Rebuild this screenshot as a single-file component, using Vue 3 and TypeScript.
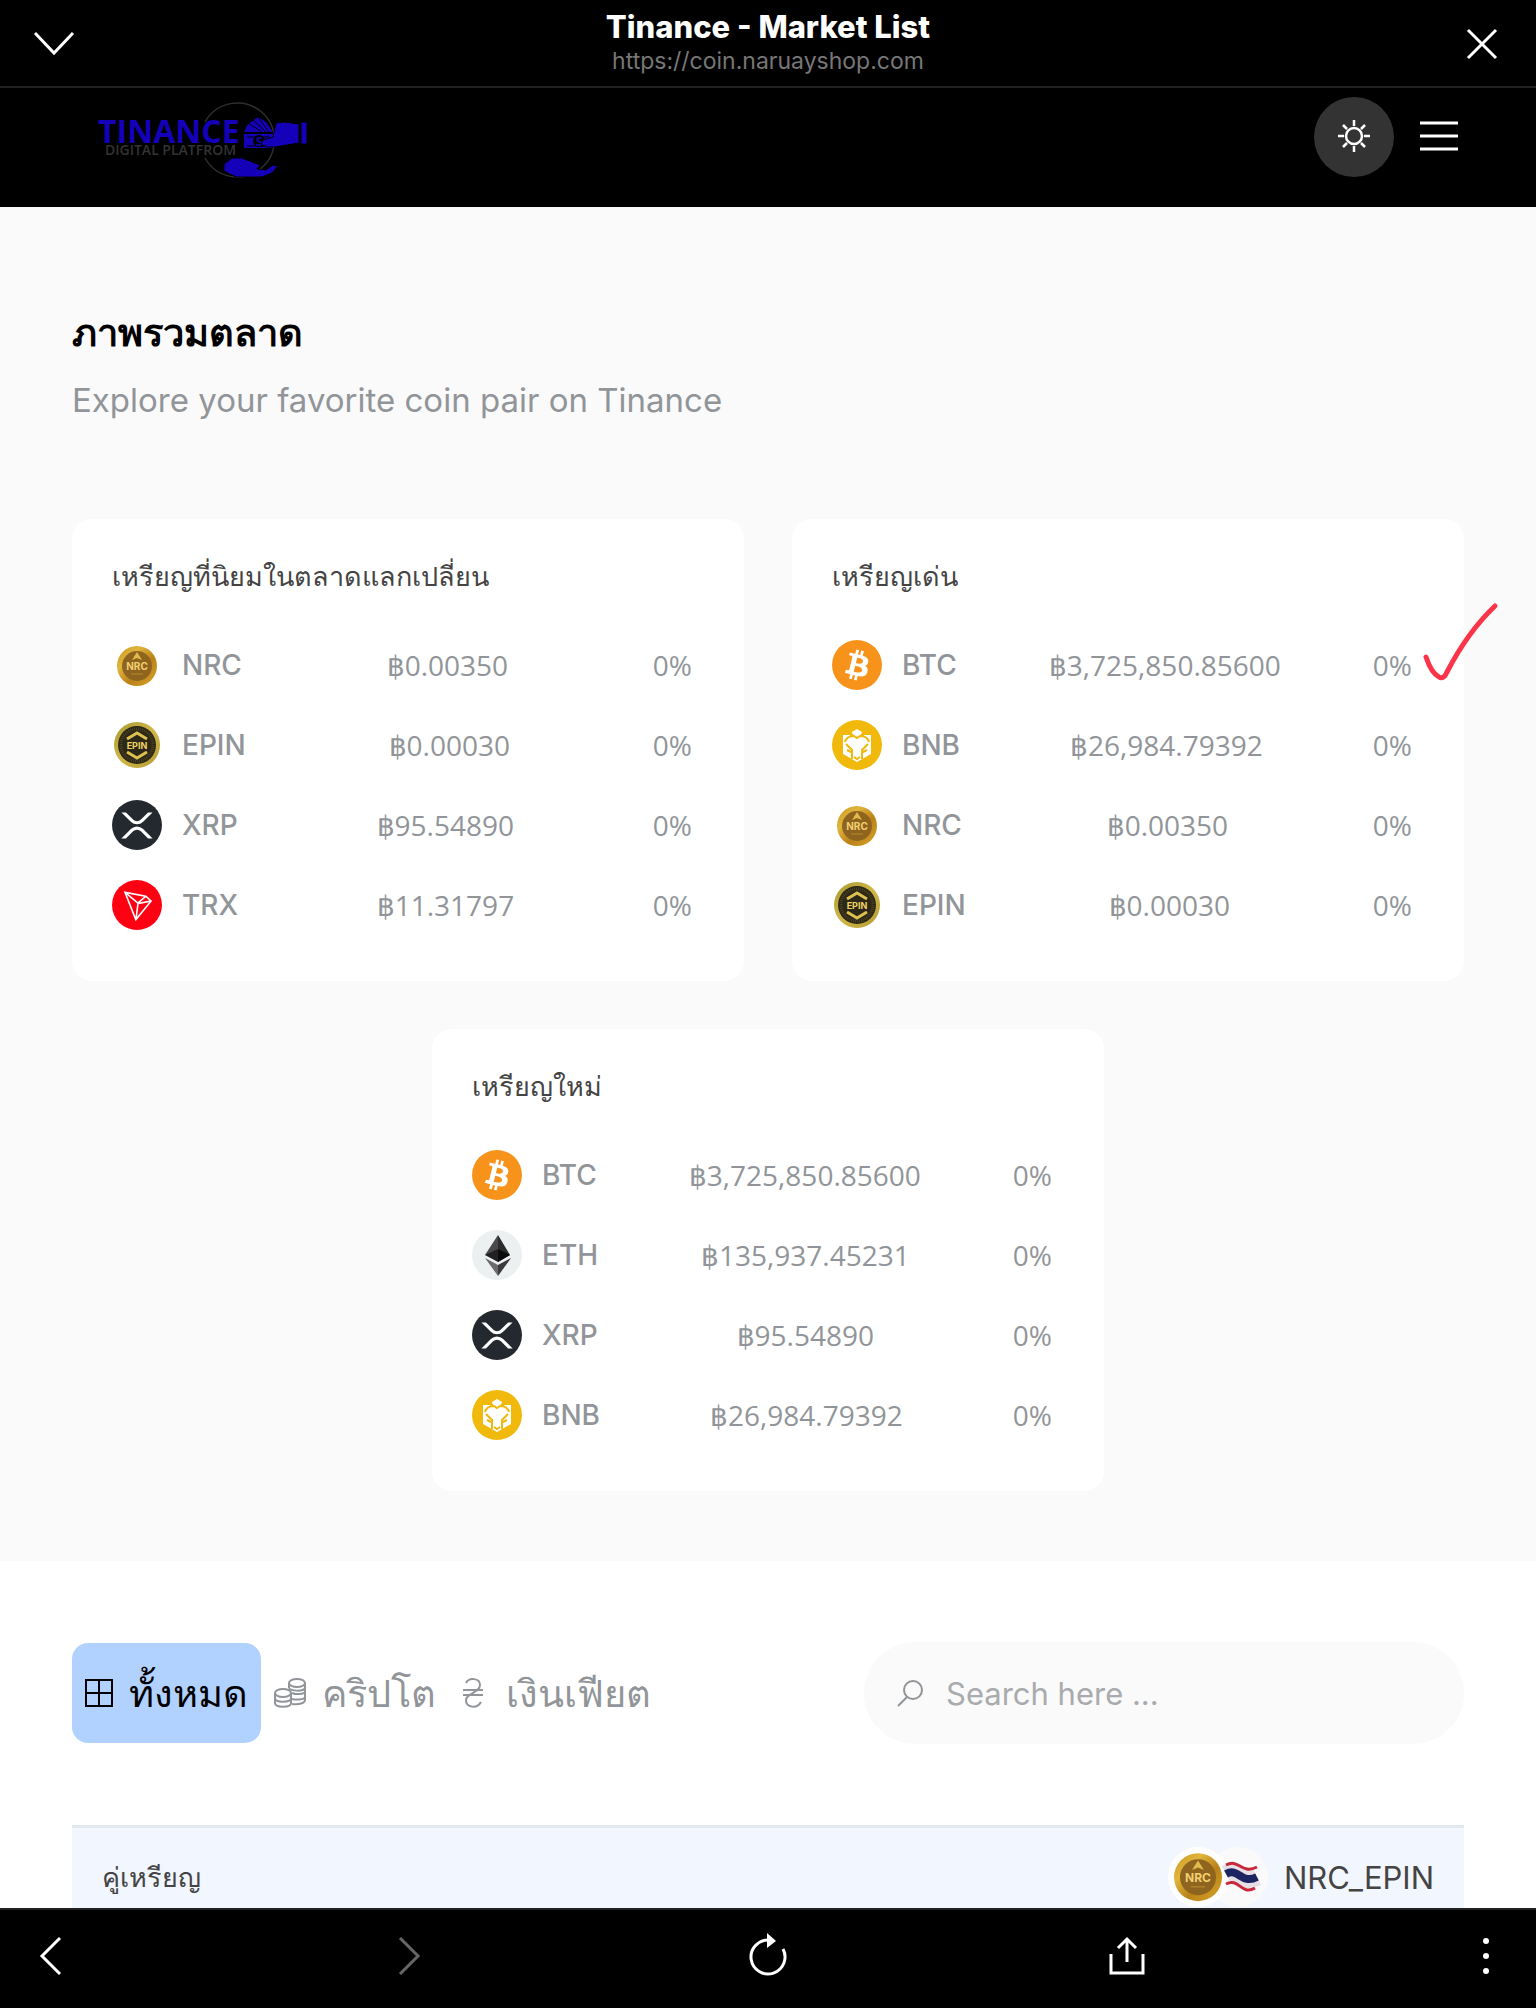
<script setup lang="ts">
interface CoinRow {
  symbol: string
  price: string
  change: string
}

interface CoinCard {
  title: string
  marked: boolean
  coins: CoinRow[]
}

const prices: Record<string, string> = {
  NRC: '฿0.00350',
  EPIN: '฿0.00030',
  XRP: '฿95.54890',
  TRX: '฿11.31797',
  BTC: '฿3,725,850.85600',
  BNB: '฿26,984.79392',
  ETH: '฿135,937.45231',
}

const rows = (...symbols: string[]): CoinRow[] =>
  symbols.map((symbol) => ({ symbol, price: prices[symbol], change: '0%' }))

const cards: CoinCard[] = [
  { title: 'เหรียญที่นิยมในตลาดแลกเปลี่ยน', marked: false, coins: rows('NRC', 'EPIN', 'XRP', 'TRX') },
  { title: 'เหรียญเด่น', marked: true, coins: rows('BTC', 'BNB', 'NRC', 'EPIN') },
  { title: 'เหรียญใหม่', marked: false, coins: rows('BTC', 'ETH', 'XRP', 'BNB') },
]
</script>

<template>
  <div class="shell">
    <svg class="sprite" width="0" height="0" aria-hidden="true">
      <defs>
        <linearGradient id="gold" x1="0" y1="0" x2="1" y2="1">
          <stop offset="0" stop-color="#c8961e" />
          <stop offset="0.3" stop-color="#e0b53c" />
          <stop offset="0.6" stop-color="#b98218" />
          <stop offset="1" stop-color="#d9a62c" />
        </linearGradient>
        <linearGradient id="brass" x1="0" y1="0" x2="1" y2="1">
          <stop offset="0" stop-color="#a89a2e" />
          <stop offset="0.5" stop-color="#d0b848" />
          <stop offset="1" stop-color="#b39a30" />
        </linearGradient>
      </defs>
      <symbol id="coin-NRC" viewBox="0 0 50 50">
        <circle cx="25" cy="26" r="20" fill="url(#gold)" />
        <circle cx="25" cy="26" r="15" fill="#8f641f" />
        <path d="M25 12l5 8-5-2-5 2z" fill="#e3bb4c" />
        <text x="25" y="30" class="coin-text" font-size="10" fill="#f0d070">NRC</text>
        <path d="M19 34h12" stroke="#b58a30" stroke-width="1" />
      </symbol>
      <symbol id="coin-EPIN" viewBox="0 0 50 50">
        <circle cx="25" cy="25" r="23" fill="url(#brass)" />
        <circle cx="25" cy="25" r="19" fill="#2c2716" />
        <circle cx="25" cy="25" r="16" fill="none" stroke="#4b4224" stroke-width="3" stroke-dasharray="1 1" />
        <path d="M15 19l10-6 10 6M15 32l10 6 10-6" fill="none" stroke="#dcc050" stroke-width="3" />
        <text x="25" y="29" class="coin-text" font-size="9" fill="#ecd464">EPIN</text>
      </symbol>
      <symbol id="coin-XRP" viewBox="0 0 32 32">
        <circle cx="16" cy="16" r="16" fill="#23292f" />
        <path d="M23.07 8h2.89l-6.015 5.957a5.621 5.621 0 01-7.89 0L6.035 8H8.93l4.57 4.523a3.556 3.556 0 004.996 0L23.07 8zM8.895 24.563H6l6.055-5.993a5.621 5.621 0 017.89 0L26 24.562h-2.895L18.5 20a3.556 3.556 0 00-4.996 0l-4.61 4.563z" fill="#fff" />
      </symbol>
      <symbol id="coin-TRX" viewBox="0 0 32 32">
        <circle cx="16" cy="16" r="16" fill="#ff0013" />
        <path d="M21.932 9.913L7.5 7.257l7.595 19.112 10.583-12.894-3.746-3.562zm-.232 1.17l2.208 2.099-6.038 1.093 3.83-3.192zm-5.142 2.973l-6.364-5.278 10.402 1.914-4.038 3.364zm-.453.934l-1.038 8.58L9.472 9.487l6.633 5.502zm.96.455l6.687-1.21-7.67 9.343.983-8.133z" fill="#fff" />
      </symbol>
      <symbol id="coin-BTC" viewBox="0 0 32 32">
        <circle cx="16" cy="16" r="16" fill="#f7931a" />
        <path d="M23.189 14.02c.314-2.096-1.283-3.223-3.465-3.975l.708-2.84-1.728-.43-.69 2.765c-.454-.114-.92-.22-1.385-.326l.695-2.783L15.596 6l-.708 2.839c-.376-.086-.746-.17-1.104-.26l.002-.009-2.384-.595-.46 1.846s1.283.294 1.256.312c.7.175.826.638.805 1.006l-.806 3.235c.048.012.11.03.18.057l-.183-.045-1.13 4.532c-.086.212-.303.531-.793.41.018.025-1.256-.313-1.256-.313l-.858 1.978 2.25.561c.418.105.828.215 1.231.318l-.715 2.872 1.727.43.708-2.84c.472.127.93.245 1.378.357l-.706 2.828 1.728.43.715-2.866c2.948.558 5.164.333 6.097-2.333.752-2.146-.037-3.385-1.588-4.192 1.13-.26 1.98-1.003 2.207-2.538zm-3.95 5.538c-.533 2.147-4.148.986-5.32.695l.95-3.805c1.172.293 4.929.872 4.37 3.11zm.535-5.569c-.487 1.953-3.495.96-4.47.717l.86-3.45c.975.243 4.118.696 3.61 2.733z" fill="#fff" />
      </symbol>
      <symbol id="coin-BNB" viewBox="0 0 50 50">
        <circle cx="25" cy="25" r="25" fill="#f0b90b" />
        <path d="M25 9l5 3v3h9v19l-14 8-14-8V15h9v-3z" fill="#fff" />
        <path d="M13 22c1-4 5-6 9-6l3 2 3-2c4 0 8 2 9 6M18 16l3-2M32 16l-3-2M14 24l6 6v9M36 24l-6 6v9M15 30l4 2M35 30l-4 2M22 37l3 2 3-2" fill="none" stroke="#f0b90b" stroke-width="2" />
      </symbol>
      <symbol id="coin-ETH" viewBox="0 0 50 50">
        <circle cx="25" cy="25" r="25" fill="#ecf0f1" />
        <path d="M26 5v21l-13-1z" fill="#4a4a4a" />
        <path d="M26 5l12 20-12 7z" fill="#2b2b2b" />
        <path d="M26 19v13l-13-7z" fill="#222" />
        <path d="M26 19l12 6-12 7z" fill="#0c0c0c" />
        <path d="M13 28l13 7v11z" fill="#6b6b6b" />
        <path d="M39 28l-13 7v11z" fill="#3a3a3a" />
      </symbol>
    </svg>

    <header class="browser-bar">
      <button class="bar-button" type="button" aria-label="Minimize">
        <svg width="40" height="40" viewBox="0 0 40 40" fill="none" stroke="#fff" stroke-width="3"><path d="M1 10l19 20L39 10" /></svg>
      </button>
      <div class="page-id">
        <div class="page-title">Tinance - Market List</div>
        <div class="page-url">https://coin.naruayshop.com</div>
      </div>
      <button class="bar-button" type="button" aria-label="Close">
        <svg width="40" height="40" viewBox="0 0 40 40" fill="none" stroke="#fff" stroke-width="3"><path d="M6 7l28 28M34 7L6 35" /></svg>
      </button>
    </header>

    <div class="viewport">
      <nav class="site-nav">
        <a class="logo" href="#" aria-label="Tinance Digital Platfrom">
          <svg width="216" height="80" viewBox="0 0 216 80">
            <path d="M107 25a37 37 0 1 1 0 36" fill="none" stroke="#2f2f2a" stroke-width="1.5" />
            <text x="0" y="46" class="logo-name">TINANCE</text>
            <text x="7" y="58" class="logo-sub">DIGITAL PLATFROM</text>
            <g fill="#1400b8">
              <path d="M146 35l4-8 10-7 8 5 7 10z" />
              <path d="M146 37h29v14h-29z" />
            </g>
            <path d="M150 26l14 9M154 22l14 13M160 20l11 15M149 40h22M149 49h24" stroke="#000" stroke-width="1" />
            <circle cx="161" cy="44" r="6" fill="#000" />
            <text x="158" y="49" class="logo-dollar">S</text>
            <g fill="#1400b8" stroke="#000" stroke-width="1">
              <path d="M178 26l8-1 15 2v19l-12 2-12 2h-8l-6-3 2-4 10-3zM203 25h6v22h-6z" />
              <path d="M126 67l8-6h10l10 4 8 3-3 4 9 1 7-5 5 1-6 7-10 4h-26l-12-6z" />
            </g>
          </svg>
        </a>
        <div class="nav-actions">
          <button class="theme-toggle" type="button" aria-label="Theme">
            <svg width="36" height="36" viewBox="0 0 36 36" fill="none" stroke="#fff" stroke-width="2.500">
              <circle cx="18" cy="17" r="8" />
              <path d="M18 1v6M18 27v6M2 17h6M28 17h6M7 6l4 4M25 24l4 4M29 6l-4 4M11 24l-4 4" />
            </svg>
          </button>
          <button class="menu-button" type="button" aria-label="Menu">
            <svg width="38" height="32" viewBox="0 0 38 32" stroke="#fff" stroke-width="3"><path d="M0 2h38M0 15h38M0 28h38" /></svg>
          </button>
        </div>
      </nav>

      <section class="overview">
        <h1>ภาพรวมตลาด</h1>
        <p class="lead">Explore your favorite coin pair on Tinance</p>
        <div class="cards">
          <article v-for="card in cards" :key="card.title" class="card">
            <h2>{{ card.title }}</h2>
            <ul>
              <li v-for="coin in card.coins" :key="coin.symbol">
                <span class="coin">
                  <svg width="50" height="50" aria-hidden="true"><use :href="'#coin-' + coin.symbol" /></svg>
                  <span class="symbol">{{ coin.symbol }}</span>
                </span>
                <span class="figure">{{ coin.price }}</span>
                <span class="figure">{{ coin.change }}</span>
              </li>
            </ul>
            <svg v-if="card.marked" class="mark" width="84" height="88" viewBox="0 0 84 88" fill="none" stroke="#fb3449" stroke-width="5" stroke-linecap="round" stroke-linejoin="round" aria-hidden="true">
              <path d="M6 58c3 9 7 17 13 20 3 2 6 0 8-5C41 46 55 26 75 7" />
            </svg>
          </article>
        </div>
      </section>

      <section class="market">
        <div class="filters">
          <div class="tabs">
            <button class="tab active" type="button">
              <svg width="28" height="28" viewBox="0 0 28 28" fill="none" stroke="currentColor" stroke-width="2"><path d="M1 1h26v26H1zM14 1v26M1 14h26" /></svg>
              <span>ทั้งหมด</span>
            </button>
            <button class="tab" type="button">
              <svg width="32" height="32" viewBox="0 0 32 32" fill="none" stroke="currentColor" stroke-width="2">
                <ellipse cx="23" cy="6" rx="8" ry="4" />
                <path d="M15 6v5M31 6v17c0 3-6 5-13 4M15 11c2 3 14 4 16 0M18 16c4 2 12 1 13-1M18 22c4 1 12 1 13-2" />
                <ellipse cx="9" cy="16" rx="8" ry="4" />
                <path d="M1 16v10c0 5 16 5 16 0V16M1 21c0 5 16 5 16 0" />
              </svg>
              <span>คริปโต</span>
            </button>
            <button class="tab" type="button">
              <svg width="28" height="32" viewBox="0 0 28 32" fill="none" stroke="currentColor" stroke-width="2"><path d="M4 6c3-6 14-5 14 2 0 8-14 8-14 15 0 8 11 9 15 2M1 13h20M1 18h20" /></svg>
              <span>เงินเฟียต</span>
            </button>
          </div>
          <label class="search">
            <svg width="28" height="28" viewBox="0 0 28 28" fill="none" stroke="#919599" stroke-width="2"><circle cx="17" cy="11" r="9" /><path d="M11 18l-9 9" /></svg>
            <input type="text" placeholder="Search here ..." aria-label="Search" />
          </label>
        </div>

        <table class="pairs">
          <tbody>
            <tr>
              <th scope="row">คู่เหรียญ</th>
              <td>
                <div class="pair">
                  <span class="pair-icons">
                    <svg width="100" height="60" viewBox="0 0 100 60" aria-hidden="true">
                      <circle cx="70" cy="30" r="30" fill="#fafafa" />
                      <circle cx="30" cy="30" r="30" fill="#fff" />
                      <g transform="translate(0 -1) scale(1.2)"><use href="#coin-NRC" width="50" height="50" /></g>
                      <g fill="none">
                        <path d="M58 27c13-7 15 11 31 3" stroke="#e6dfe6" stroke-width="18" />
                        <path d="M58 18c13-7 15 10 31 2M58 37c13-7 15 12 29 4" stroke="#c8283c" stroke-width="3" />
                        <path d="M58 27c13-7 15 11 31 3" stroke="#1d2462" stroke-width="8" />
                      </g>
                    </svg>
                  </span>
                  <span>NRC_EPIN</span>
                </div>
              </td>
            </tr>
          </tbody>
        </table>
      </section>
    </div>

    <footer class="toolbar">
      <button class="bar-button" type="button" aria-label="Back">
        <svg width="40" height="40" viewBox="0 0 40 40" fill="none" stroke="#fff" stroke-width="3"><path d="M30 2L12 20l18 18" /></svg>
      </button>
      <button class="bar-button" type="button" aria-label="Forward" disabled>
        <svg width="40" height="40" viewBox="0 0 40 40" fill="none" stroke="#666" stroke-width="3"><path d="M11 2l18 18-18 18" /></svg>
      </button>
      <button class="bar-button" type="button" aria-label="Reload">
        <svg width="40" height="40" viewBox="0 0 40 40" fill="none" stroke="#fff" stroke-width="3"><path d="M20 4a17 17 0 1 0 15 9" /><path d="M19-3l9 8-9 7z" fill="#fff" stroke="none" /></svg>
      </button>
      <button class="bar-button" type="button" aria-label="Share">
        <svg width="40" height="40" viewBox="0 0 40 40" fill="none" stroke="#fff" stroke-width="3"><path d="M4 18v19h32V18M20 26V3M11 12l9-9 9 9" /></svg>
      </button>
      <button class="bar-button" type="button" aria-label="More">
        <svg width="40" height="40" viewBox="0 0 40 40" fill="#fff"><circle cx="20" cy="5" r="3" /><circle cx="20" cy="20" r="3" /><circle cx="20" cy="35" r="3" /></svg>
      </button>
    </footer>
  </div>
</template>

<style>
body {
  margin: 0;
}
</style>

<style scoped>
.shell {
  display: flex;
  flex-direction: column;
  height: 100vh;
  background: #fff;
  color: #919599;
  font-family: Inter, "Noto Sans", sans-serif;
}

.sprite {
  position: absolute;
}

.coin-text {
  font-family: Inter, sans-serif;
  font-weight: 700;
  text-anchor: middle;
}

button {
  display: flex;
  align-items: center;
  padding: 0;
  border: 0;
  background: none;
  color: inherit;
  font: inherit;
}

svg {
  display: block;
  flex: none;
  overflow: visible;
}

.browser-bar {
  display: flex;
  align-items: center;
  justify-content: space-between;
  flex: none;
  box-sizing: border-box;
  height: 88px;
  padding: 0 34px;
  border-bottom: 2px solid #222;
  background: #000;
}

.page-id {
  text-align: center;
}

.page-title {
  color: #fff;
  font-size: 31px;
  font-weight: 800;
  line-height: 36px;
}

.page-url {
  color: #777;
  font-size: 23px;
  line-height: 32px;
}

.viewport {
  flex: 1;
  min-height: 0;
  overflow-y: auto;
  scrollbar-width: none;
}

.site-nav {
  display: flex;
  align-items: center;
  justify-content: space-between;
  box-sizing: border-box;
  height: 119px;
  padding: 0 78px 22px 98px;
  background: #000;
}

.logo-name {
  fill: #1400b8;
  font-family: "Open Sans", sans-serif;
  font-size: 32px;
  font-weight: 700;
}

.logo-sub {
  fill: #333;
  font-family: "Open Sans", sans-serif;
  font-size: 14px;
  font-weight: 600;
}

.logo-dollar {
  fill: #1400b8;
  font-family: "Open Sans", sans-serif;
  font-size: 12px;
  font-weight: 700;
}

.nav-actions {
  display: flex;
  align-items: center;
  gap: 26px;
}

.theme-toggle {
  justify-content: center;
  width: 80px;
  height: 80px;
  border-radius: 50%;
  background: #333;
}

.overview {
  padding: 97px 72px 70px;
  background: #fafafa;
}

h1 {
  margin: 0;
  color: #000;
  font-size: 38px;
  font-weight: 700;
  line-height: 56px;
}

.lead {
  margin: 16px 0 95px;
  font-size: 33px;
  line-height: 48px;
}

.cards {
  display: flex;
  flex-wrap: wrap;
  justify-content: center;
  gap: 48px;
}

.card {
  position: relative;
  box-sizing: border-box;
  width: calc(50% - 24px);
  padding: 38px 40px 36px;
  border-radius: 20px;
  background: #fff;
}

h2 {
  margin: 0 0 28px;
  color: #444;
  font-size: 27px;
  font-weight: 400;
  line-height: 40px;
}

ul {
  margin: 0;
  padding: 0;
  list-style: none;
}

li {
  display: flex;
  align-items: center;
  justify-content: space-between;
  height: 80px;
  padding-right: 12px;
  font-size: 28px;
}

.coin {
  display: flex;
  align-items: center;
  gap: 20px;
}

.symbol {
  font-weight: 500;
}

.figure {
  font-family: "Open Sans", sans-serif;
}

.mark {
  position: absolute;
  top: 80px;
  right: -40px;
}

.market {
  padding: 81px 72px 80px;
}

.filters {
  display: flex;
  align-items: center;
  justify-content: space-between;
  margin-bottom: 81px;
}

.tabs {
  display: flex;
}

.tab {
  gap: 16px;
  height: 100px;
  padding: 0 13px;
  border-radius: 16px;
  font-size: 38px;
  font-weight: 300;
  line-height: 60px;
}

.tab.active {
  background: #b1d1ff;
  color: #000;
}

.search {
  display: flex;
  align-items: center;
  gap: 22px;
  box-sizing: border-box;
  width: 600px;
  height: 102px;
  padding: 0 32px;
  border-radius: 51px;
  background: #fafafa;
}

input {
  flex: 1;
  min-width: 0;
  padding: 0;
  border: 0;
  outline: 0;
  background: none;
  color: #919599;
  font: inherit;
  font-size: 31px;
}

input::placeholder {
  color: #a9abae;
  opacity: 1;
}

.pairs {
  width: 100%;
  border-collapse: collapse;
  border-top: 3px solid #e2e8f2;
  background: #f2f6ff;
  color: #444;
}

th,
td {
  height: 98px;
  padding: 0 30px;
  font-size: 27px;
  font-weight: 400;
  text-align: left;
}

.pair {
  display: flex;
  align-items: center;
  justify-content: flex-end;
  gap: 16px;
  font-size: 31px;
}

.toolbar {
  display: flex;
  align-items: center;
  justify-content: space-between;
  flex: none;
  box-sizing: border-box;
  height: 100px;
  padding: 0 30px 6px;
  border-top: 2px solid #222;
  background: #000;
}
</style>
